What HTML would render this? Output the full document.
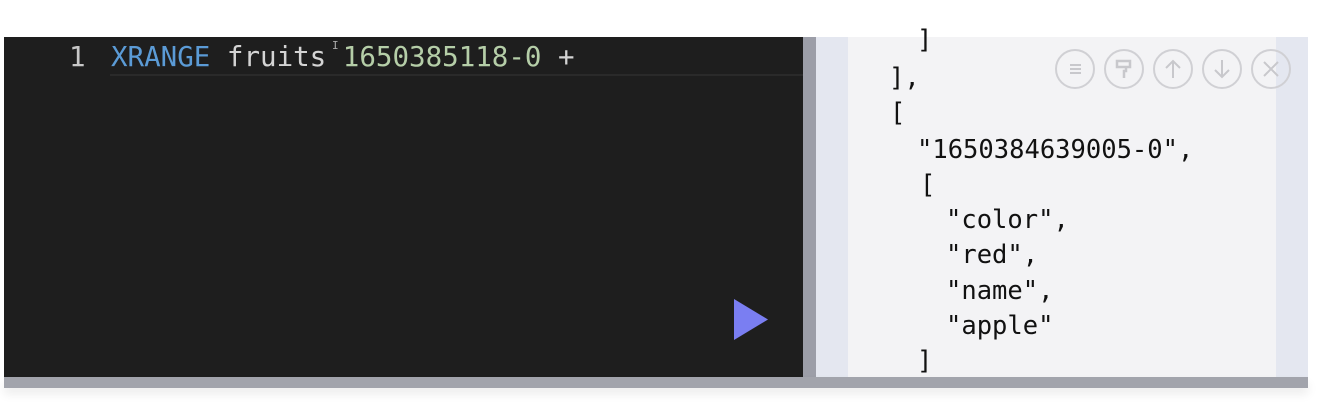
<!DOCTYPE html>
<html><head><style>
body{margin:0;width:1324px;height:412px;background:#fff;position:relative;overflow:hidden;font-family:"DejaVu Sans Mono","Liberation Mono",monospace}
.ed{position:absolute;left:4px;top:37px;width:799px;height:340px;background:#1e1e1e}
.t{position:absolute;white-space:pre;line-height:1}
.gut{position:absolute;left:803px;top:37px;width:13px;height:340px;background:#9c9ea8}
.rp{position:absolute;left:816px;top:37px;width:492px;height:340px;background:#e4e7f0}
.rc{position:absolute;left:848px;top:37px;width:428px;height:340px;background:#f3f3f5}
.bb{position:absolute;left:4px;top:377px;width:1304px;height:11px;background:#a2a4ac;box-shadow:0 6px 10px rgba(0,0,0,0.08)}
.r{font-size:25.5px;color:#111}
.b{position:absolute;top:49px;width:40px;height:40px;border:2px solid #d0d0d4;border-radius:50%;box-sizing:border-box}
</style></head><body>
<div class="ed"></div>
<div class="t" style="left:69px;top:44px;font-size:27.5px;color:#c8c8c8">1</div>
<div class="t" style="left:111px;top:44px;font-size:27.5px"><span style="color:#5b9bd6">XRANGE</span><span style="color:#d4d4d4"> fruits </span><span style="color:#b5cea8">1650385118-0</span><span style="color:#d4d4d4"> +</span></div>
<div style="position:absolute;left:110px;top:74px;width:693px;height:2px;background:#2a2a2a"></div>
<div class="t" style="left:332px;top:40px;font-size:11px;color:#aaa">I</div>
<svg style="position:absolute;left:733px;top:298px" width="36" height="43"><polygon points="1,1 35,21.5 1,42" fill="#7a7ef2"/></svg>
<div class="gut"></div><div class="rp"></div><div class="rc"></div><div class="bb"></div>
<div class="t r" style="left:917px;top:28px">]</div>
<div class="t r" style="left:889px;top:66px">],</div>
<div class="t r" style="left:890px;top:101px">[</div>
<div class="t r" style="left:917px;top:138px">"1650384639005-0",</div>
<div class="t r" style="left:920px;top:173px">[</div>
<div class="t r" style="left:946px;top:208px">"color",</div>
<div class="t r" style="left:946px;top:243px">"red",</div>
<div class="t r" style="left:946px;top:279px">"name",</div>
<div class="t r" style="left:946px;top:314px">"apple"</div>
<div class="t r" style="left:917px;top:349px">]</div>
<div class="b" style="left:1055px"><svg width="36" height="36"><g stroke="#c8c8cc" stroke-width="2"><line x1="13" y1="14" x2="24" y2="14"/><line x1="13" y1="18" x2="24" y2="18"/><line x1="13" y1="22" x2="24" y2="22"/></g></svg></div>
<div class="b" style="left:1104px"><svg width="36" height="36"><path d="M11 10h13v6H11zM16 16h4v4h-2v7" fill="none" stroke="#c8c8cc" stroke-width="2.5"/></svg></div>
<div class="b" style="left:1153px"><svg width="36" height="36"><path d="M18 27V10M11 17l7-7 7 7" fill="none" stroke="#c8c8cc" stroke-width="2"/></svg></div>
<div class="b" style="left:1202px"><svg width="36" height="36"><path d="M18 9v17M11 19l7 7 7-7" fill="none" stroke="#c8c8cc" stroke-width="2"/></svg></div>
<div class="b" style="left:1251px"><svg width="36" height="36"><path d="M11 11l14 14M25 11L11 25" fill="none" stroke="#c8c8cc" stroke-width="2"/></svg></div>
</body></html>
